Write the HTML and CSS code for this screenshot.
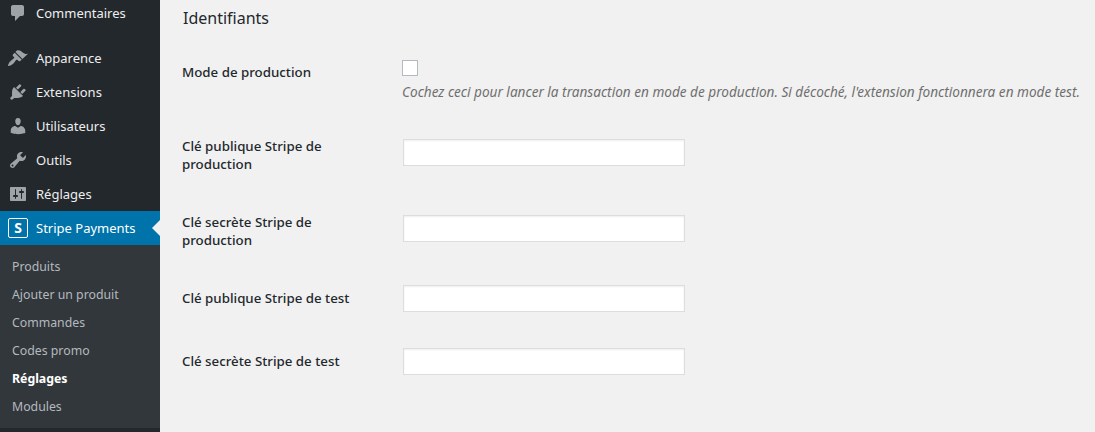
FILE: index.html
```html
<!DOCTYPE html>
<html lang="fr">
<head>
    <meta charset="UTF-8">
    <title>Stripe Payments - Réglages</title>
    <link rel="stylesheet" href="styles.css">
</head>
<body>
    <div class="wrap">
        <nav class="sidebar">
            <ul class="menu">
                <li class="menu-item menu-first">
                    <svg class="icon" viewBox="0 0 20 20"><path d="M5 2h9c1.100 0 2 .9 2 2v7c0 1.100-.9 2-2 2h-2l-5 5v-5H5c-1.100 0-2-.9-2-2V4c0-1.100.9-2 2-2z"/></svg>
                    <span>Commentaires</span>
                </li>
                <li class="menu-item menu-gap">
                    <svg class="icon" viewBox="0 0 20 20"><path d="M14.480 11.060L7.410 3.990l1.500-1.500c.5-.56 2.300-.47 3.510.32 1.210.8 1.430 1.280 2.910 2.100 1.180.64 2.450 1.260 4.670.85zm-.71.71L6.700 4.700 4.930 6.470c-.39.39-.39 1.020 0 1.410l1.060 1.060c.39.39.39 1.030 0 1.420-.6.6-1.430 1.110-2.210 1.690-.35.26-.7.53-1.010.84C1.430 13.710 0 16.060 0 18c1.940 0 4.290-1.430 5.640-2.770.31-.31.58-.66.84-1.010.58-.78 1.090-1.610 1.690-2.210.39-.39 1.030-.39 1.420 0l1.060 1.060c.39.39 1.020.39 1.410 0z"/></svg>
                    <span>Apparence</span>
                </li>
                <li class="menu-item">
                    <svg class="icon" viewBox="0 0 20 20"><path d="M13.110 4.360L9.870 7.600 8 5.730l3.240-3.240c.35-.34 1.050-.2 1.560.32.52.51.66 1.210.31 1.550zm-8 1.770l.91-1.120 9.010 9.010-1.190.84c-.71.71-2.630 1.160-3.820 1.160H6.140L4.900 17.260c-.59.59-1.540.59-2.120 0-.59-.58-.59-1.530 0-2.120l1.240-1.240v-3.880c0-1.130.4-3.190 1.090-3.890zm7.260 3.970l3.240-3.240c.34-.35 1.040-.21 1.550.31.52.51.66 1.210.31 1.550l-3.240 3.250z"/></svg>
                    <span>Extensions</span>
                </li>
                <li class="menu-item">
                    <svg class="icon" viewBox="0 0 20 20"><path d="M10 9.250c-2.270 0-2.730-3.440-2.730-3.440C7 4.020 7.820 2 9.970 2c2.160 0 2.980 2.020 2.710 3.810 0 0-.41 3.440-2.680 3.440zm0 2.570L12.720 10c2.390 0 4.520 2.330 4.520 4.530v2.490s-3.650 1.130-7.240 1.130c-3.650 0-7.240-1.130-7.240-1.130v-2.490c0-2.250 1.940-4.480 4.470-4.480z"/></svg>
                    <span>Utilisateurs</span>
                </li>
                <li class="menu-item">
                    <svg class="icon" viewBox="0 0 20 20"><path d="M16.680 9.770c-1.340 1.340-3.300 1.670-4.950.99l-5.410 6.520c-.99.99-2.590.99-3.580 0s-.99-2.590 0-3.570l6.520-5.420c-.68-1.650-.35-3.610.99-4.950 1.280-1.280 3.120-1.620 4.720-1.060l-2.890 2.890 2.820 2.820 2.860-2.870c.53 1.580.18 3.390-1.080 4.670zM3.810 16.210c.4.39 1.040.39 1.430 0 .4-.4.4-1.040 0-1.430-.39-.4-1.030-.4-1.430 0-.39.39-.39 1.030 0 1.430z"/></svg>
                    <span>Outils</span>
                </li>
                <li class="menu-item">
                    <svg class="icon" viewBox="0 0 20 20"><path d="M18 16V4c0-.55-.45-1-1-1H3c-.55 0-1 .45-1 1v12c0 .55.45 1 1 1h14c.55 0 1-.45 1-1zM8 11h1c.55 0 1 .45 1 1s-.45 1-1 1H8v1.500c0 .28-.22.5-.5.5s-.5-.22-.5-.5V13H6c-.55 0-1-.45-1-1s.45-1 1-1h1V5.500c0-.28.22-.5.5-.5s.5.22.5.5V11zm5-2h-1c-.55 0-1-.45-1-1s.45-1 1-1h1V5.500c0-.28.22-.5.5-.5s.5.22.5.5V7h1c.55 0 1 .45 1 1s-.45 1-1 1h-1v5.500c0 .28-.22.5-.5.5s-.5-.22-.5-.5V9z"/></svg>
                    <span>Réglages</span>
                </li>
                <li class="menu-item menu-current">
                    <span class="stripe-logo">S</span>
                    <span>Stripe Payments</span>
                </li>
            </ul>
            <ul class="submenu">
                <li>Produits</li>
                <li>Ajouter un produit</li>
                <li>Commandes</li>
                <li>Codes promo</li>
                <li class="sub-current">Réglages</li>
                <li>Modules</li>
            </ul>
        </nav>

        <main class="content">
            <h2>Identifiants</h2>
            <table class="form-table">
                <tr class="row-check">
                    <th>Mode de production</th>
                    <td>
                        <input type="checkbox" class="check">
                        <p class="description">Cochez ceci pour lancer la transaction en mode de production. Si décoché, l'extension fonctionnera en mode test.</p>
                    </td>
                </tr>
                <tr class="row-tall">
                    <th>Clé publique Stripe de production</th>
                    <td><input type="text" class="field"></td>
                </tr>
                <tr class="row-tall">
                    <th>Clé secrète Stripe de production</th>
                    <td><input type="text" class="field"></td>
                </tr>
                <tr>
                    <th>Clé publique Stripe de test</th>
                    <td><input type="text" class="field"></td>
                </tr>
                <tr>
                    <th>Clé secrète Stripe de test</th>
                    <td><input type="text" class="field"></td>
                </tr>
            </table>
        </main>
    </div>
</body>
</html>
```

FILE: styles.css
```css
html, body {
    margin: 0;
    height: 100%;
    overflow: hidden;
}

body {
    background: #f1f1f1;
    color: #23282d;
    font-family: "Noto Sans", "Open Sans", sans-serif;
    font-size: 13px;
}

.wrap {
    display: flex;
    height: 432px;
}

/* Sidebar */
.sidebar {
    flex: 0 0 160px;
    background: #23282d;
    height: 432px;
    overflow: hidden;
}

.menu,
.submenu {
    list-style: none;
    margin: 0;
    padding: 0;
}

.menu-item {
    display: flex;
    align-items: center;
    height: 34px;
    padding-left: 8px;
    color: #eee;
    font-size: 13px;
}

.menu-first {
    margin-top: -4px;
}

.menu-gap {
    margin-top: 11px;
}

.icon {
    width: 20px;
    height: 20px;
    margin-right: 8px;
    fill: #9ea3a8;
    flex: none;
}

.menu-current {
    position: relative;
    background: #0073aa;
    color: #fff;
}

.menu-current::after {
    content: "";
    position: absolute;
    right: 0;
    top: 9px;
    border: 8px solid transparent;
    border-right-color: #f1f1f1;
    border-left-width: 0;
}

.stripe-logo {
    box-sizing: border-box;
    width: 20px;
    height: 20px;
    margin-right: 8px;
    border: 1px solid #fff;
    border-radius: 2px;
    color: #fff;
    font-weight: 700;
    font-size: 14px;
    line-height: 18px;
    text-align: center;
}

.submenu {
    background: #32373c;
    padding: 8px 0 7px;
}

.submenu li {
    height: 28px;
    line-height: 28px;
    padding-left: 12px;
    color: #b4b9be;
    font-size: 12.300px;
}

.submenu .sub-current {
    color: #fff;
    font-weight: 700;
}

/* Main form */
.content {
    flex: 1;
    padding-left: 22px;
    min-width: 0;
}

.content h2 {
    margin: 7px 0 0 1px;
    height: 36px;
    font-size: 16px;
    font-weight: 400;
    line-height: 22px;
    color: #23282d;
}

.form-table {
    border-collapse: collapse;
}

.form-table th {
    box-sizing: border-box;
    width: 221px;
    padding: 20px 21px 20px 0;
    vertical-align: top;
    text-align: left;
    font-size: 13.300px;
    font-weight: 500;
    line-height: 18px;
}

.form-table td {
    padding: 16px 0 20px;
    vertical-align: top;
}

.form-table .row-tall td {
    padding: 22px 0 27px;
}

.form-table .row-check td {
    padding: 17px 0 16px;
}

.check {
    display: block;
    appearance: none;
    box-sizing: border-box;
    width: 16px;
    height: 16px;
    margin: 0 0 7px -1px;
    background: #fff;
    border: 1px solid #b4b9be;
}

.description {
    margin: 0 0 0 -1px;
    font-size: 13.600px;
    font-style: italic;
    line-height: 18px;
    color: #6f6f6f;
    white-space: nowrap;
}

.field {
    display: block;
    box-sizing: border-box;
    width: 282px;
    height: 27px;
    margin: 0;
    background: #fff;
    border: 1px solid #ddd;
    box-shadow: inset 0 1px 2px rgba(0, 0, 0, 0.07);
}
```
